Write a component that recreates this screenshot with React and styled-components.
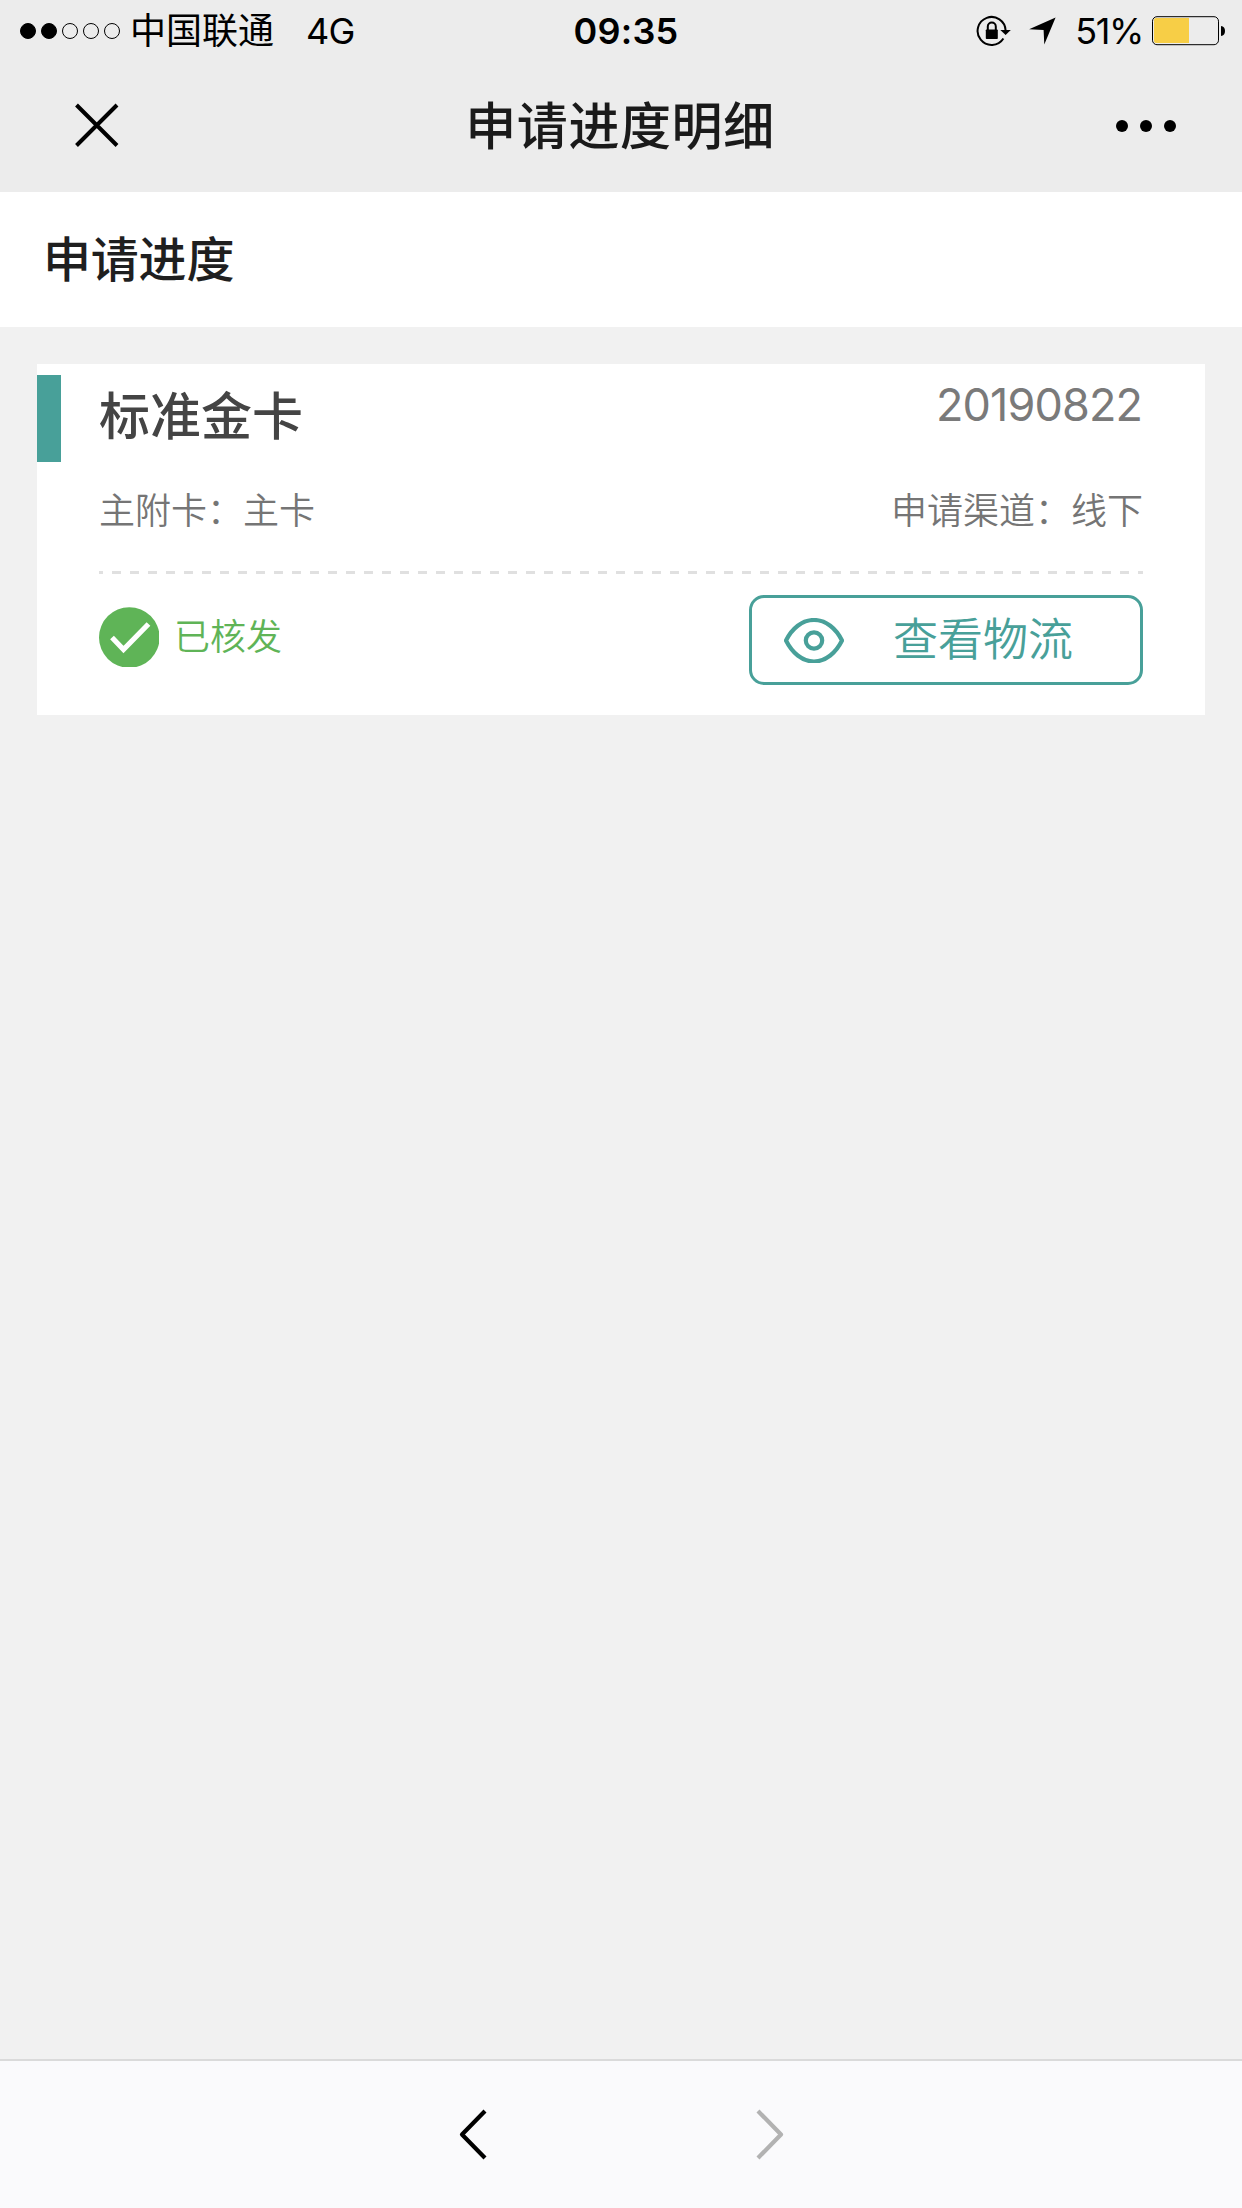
import React from 'react'
import styled, { createGlobalStyle } from 'styled-components'

const TEAL = '#48a099'
const GREEN = '#5fb457'

const GlobalStyle = createGlobalStyle`
  * {
    box-sizing: border-box;
  }

  body {
    margin: 0;
    background: #f1f1f1;
    font-family: Inter, 'Noto Sans CJK SC', sans-serif;
  }

  svg {
    display: block;
    flex: none;
  }
`

const Screen = styled.div`
  display: flex;
  flex-direction: column;
  width: 1242px;
  height: 2208px;
`

const TopBar = styled.header`
  height: 192px;
  background: #ececec;
`

const StatusBar = styled.div`
  display: grid;
  grid-template-columns: 1fr auto 1fr;
  align-items: center;
  height: 62px;
  padding: 0 17px 0 20px;
  font-size: 36px;
  line-height: 62px;
  color: #000;
`

const StatusGroup = styled.div`
  display: flex;
  align-items: center;
  justify-content: ${props => (props.$end ? 'flex-end' : 'flex-start')};
`

const Signal = styled.div`
  display: flex;
  gap: 5px;
  margin-right: 10px;
`

const SignalDot = styled.span`
  width: 16px;
  height: 16px;
  border: 1px solid #000;
  border-radius: 50%;
  background: ${props => (props.$on ? '#000' : 'transparent')};
`

const Carrier = styled.span`
  padding-top: 1px;
  line-height: 61px;
`

const Network = styled.span`
  margin-left: 32px;
  letter-spacing: -0.8px;
`

const Time = styled.div`
  padding-left: 7px;
  font-weight: 600;
  letter-spacing: 0.2px;
`

const Percent = styled.span`
  margin: 0 9px 0 19px;
  letter-spacing: -1.4px;
`

const NavBar = styled.div`
  display: grid;
  grid-template-columns: 1fr auto 1fr;
  align-items: center;
  height: 128px;
  padding: 0 66px 0 74px;
`

const NavTitle = styled.h1`
  margin: 0;
  padding: 2px 10px 0 0;
  font-size: 51px;
  font-weight: 500;
  line-height: 72px;
  letter-spacing: 0.6px;
  color: #1a1a1a;
`

const IconButton = styled.button`
  display: block;
  padding: 0;
  border: 0;
  background: none;
  justify-self: ${props => (props.$end ? 'end' : 'start')};
`

const SectionHeader = styled.h2`
  height: 135px;
  margin: 0;
  padding-left: 43px;
  background: #fff;
  font-size: 48px;
  font-weight: 500;
  line-height: 135px;
  letter-spacing: -0.2px;
  color: #1f1f1f;
`

const Content = styled.main`
  flex: 1;
  padding: 37px;
`

const Card = styled.section`
  height: 351px;
  padding: 11px 62px 0 0;
  background: #fff;
`

const CardHead = styled.div`
  display: flex;
  height: 87px;
`

const Marker = styled.span`
  width: 24px;
  margin-right: 38px;
  background: ${TEAL};
`

const CardName = styled.h3`
  flex: 1;
  margin: 0;
  font-size: 51px;
  font-weight: 500;
  line-height: 83px;
  color: #444;
`

const CardDate = styled.span`
  margin-right: 1px;
  font-size: 45px;
  font-weight: 400;
  line-height: 60px;
  letter-spacing: -0.9px;
  color: #7a7a7a;
`

const CardBody = styled.div`
  padding-left: 62px;
`

const Details = styled.div`
  display: flex;
  justify-content: space-between;
  padding: 24px 0 0;
  font-size: 36px;
  font-weight: 350;
  line-height: 50px;
  color: #757575;
`

const Divider = styled.div`
  height: 3px;
  margin: 35px 0 21px;
  background: repeating-linear-gradient(
      90deg,
      #e0e0e0 0 9px,
      transparent 9px 18px
    ) -5px 0 / 1080px 3px;
`

const CardFoot = styled.div`
  display: flex;
  align-items: center;
  justify-content: space-between;
`

const Status = styled.div`
  display: flex;
  align-items: center;
  gap: 15px;
  height: 84px;
  margin-bottom: 6px;
  font-size: 36px;
  font-weight: 350;
  line-height: 60px;
  color: ${GREEN};
`

const TrackButton = styled.button`
  display: flex;
  align-items: center;
  gap: 49px;
  width: 394px;
  height: 90px;
  padding: 0 0 0 32px;
  border: 3px solid ${TEAL};
  border-radius: 15px;
  background: #fff;
  font: 350 45px / 84px Inter, 'Noto Sans CJK SC', sans-serif;
  color: ${TEAL};
`

const Toolbar = styled.footer`
  display: flex;
  align-items: flex-start;
  justify-content: center;
  gap: 269px;
  height: 149px;
  padding-top: 48px;
  border-top: 2px solid #dadada;
  background: #fafafc;
`

const LockIcon = () => (
  <svg width="36" height="32" viewBox="0 0 36 32">
    <path d="M28.4 23.5A14 14 0 1 1 30.6 15.5" fill="none" stroke="#000" strokeWidth="2" />
    <path d="M25.3 15h10.5l-5.2 5z" />
    <rect x="10.8" y="14.5" width="12" height="9.5" rx="0.8" />
    <path d="M12.8 15v-3.5a4 4 0 0 1 8 0V15" fill="none" stroke="#000" strokeWidth="2" />
  </svg>
)

const Arrow = styled.svg`
  margin-left: 17px;
`

const LocationIcon = () => (
  <Arrow width="28" height="28" viewBox="0 0 28 28">
    <path d="M27.6 0.5 16.3 27.5 15.6 13 1.1 12.3z" />
  </Arrow>
)

const BatteryIcon = () => (
  <svg width="73" height="30" viewBox="0 0 73 30">
    <rect x="0.5" y="0.7" width="66" height="28" rx="4.5" fill="none" stroke="#000" />
    <path d="M4 2H37V27H4Q2 27 2 25V4Q2 2 4 2z" fill="#f7ce46" />
    <path d="M69 10q4 0.5 4 5t-4 5z" />
  </svg>
)

const CloseIcon = () => (
  <svg width="46" height="46" viewBox="0 0 46 46">
    <path d="M2.5 2 43 42.5M43 2 2.5 42.5" stroke="#000" strokeWidth="4" />
  </svg>
)

const MoreIcon = () => (
  <svg width="60" height="12" viewBox="0 0 60 12">
    <circle cx="6" cy="6" r="6" />
    <circle cx="30" cy="6" r="6" />
    <circle cx="54" cy="6" r="6" />
  </svg>
)

const CheckIcon = () => (
  <svg width="60" height="60" viewBox="0 0 60 60">
    <circle cx="30.3" cy="30.5" r="30.3" fill={GREEN} />
    <path d="M13 30.5 24.5 42.5 49.5 17" fill="none" stroke="#fff" strokeWidth="5.2" />
  </svg>
)

const EyeIcon = () => (
  <svg width="60" height="45" viewBox="0 0 60 45" fill="none" stroke={TEAL}>
    <path
      d="M2 22.5C8 10.5 18 2 30 2S52 10.5 58 22.5C52 34.5 42 43.5 30 43.5S8 34.5 2 22.5z"
      strokeWidth="4.2"
      strokeLinejoin="round"
    />
    <circle cx="30" cy="22.5" r="8.2" strokeWidth="4.2" />
  </svg>
)

const ChevronIcon = ({ d, color }) => (
  <svg width="28" height="51" viewBox="0 0 28 51">
    <path d={d} fill="none" stroke={color} strokeWidth="4.2" strokeLinejoin="round" />
  </svg>
)

export default function App() {
  return (
    <Screen>
      <GlobalStyle />
      <TopBar>
        <StatusBar>
          <StatusGroup>
            <Signal>
              {[true, true, false, false, false].map((on, i) => (
                <SignalDot key={i} $on={on} />
              ))}
            </Signal>
            <Carrier>中国联通</Carrier>
            <Network>4G</Network>
          </StatusGroup>
          <Time>09:35</Time>
          <StatusGroup $end>
            <LockIcon />
            <LocationIcon />
            <Percent>51%</Percent>
            <BatteryIcon />
          </StatusGroup>
        </StatusBar>
        <NavBar>
          <IconButton aria-label="关闭">
            <CloseIcon />
          </IconButton>
          <NavTitle>申请进度明细</NavTitle>
          <IconButton $end aria-label="更多">
            <MoreIcon />
          </IconButton>
        </NavBar>
      </TopBar>
      <SectionHeader>申请进度</SectionHeader>
      <Content>
        <Card>
          <CardHead>
            <Marker />
            <CardName>标准金卡</CardName>
            <CardDate>20190822</CardDate>
          </CardHead>
          <CardBody>
            <Details>
              <span>主附卡：主卡</span>
              <span>申请渠道：线下</span>
            </Details>
            <Divider />
            <CardFoot>
              <Status>
                <CheckIcon />
                已核发
              </Status>
              <TrackButton>
                <EyeIcon />
                查看物流
              </TrackButton>
            </CardFoot>
          </CardBody>
        </Card>
      </Content>
      <Toolbar>
        <IconButton aria-label="后退">
          <ChevronIcon d="M26 2 3 25.5 26 49" color="#000" />
        </IconButton>
        <IconButton aria-label="前进">
          <ChevronIcon d="M2 2 25 25.5 2 49" color="#b2b2b2" />
        </IconButton>
      </Toolbar>
    </Screen>
  )
}
